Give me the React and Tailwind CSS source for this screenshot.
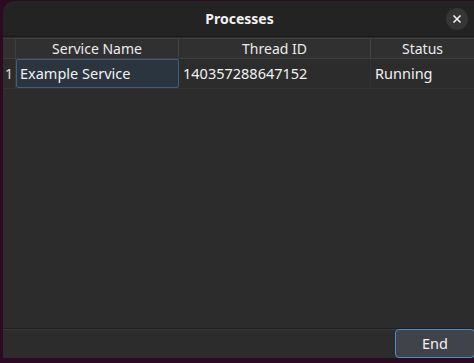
export default function App() {
  const font = { fontFamily: '"Noto Sans", "DejaVu Sans", sans-serif' };
  return (
    <div
      className="w-[474px] h-[363px] overflow-hidden bg-[#2b0a22] flex flex-col pl-[3px] pt-[1px]"
      style={font}>
      <div className="flex flex-col h-[357px] bg-[#2c2c2c] rounded-tl-[12px] overflow-hidden">
        {/* title bar */}
        <div className="h-[36px] shrink-0 bg-[#232323] flex items-center justify-center relative border-b border-[#1a1a1a]">
          <span className="text-[14px] font-bold text-[#f2f2f2] pl-[2px]">Processes</span>
          <div className="absolute right-[6px] top-[7px] w-[22px] h-[22px] rounded-full bg-[#353535] flex items-center justify-center">
            <svg width="10" height="10" viewBox="0 0 10 10">
              <path d="M1.5 1.5 L8.5 8.5 M8.5 1.5 L1.5 8.5" stroke="#f0f0f0" strokeWidth="1.6" />
            </svg>
          </div>
        </div>

        {/* table */}
        <div className="flex-1 flex flex-col pt-[1px] border-b border-[#1f1f1f]">
          <div className="flex h-[21px] bg-[#303030] border-t border-b border-[#3e3e3e] text-[14px] text-[#ececec] leading-none">
            <div className="w-[13px] border-r border-[#3e3e3e]" />
            <div className="w-[163px] border-r border-[#444] flex items-center justify-center">Service Name</div>
            <div className="w-[192px] border-r border-[#444] flex items-center justify-center">Thread ID</div>
            <div className="flex-1 flex items-center justify-center">Status</div>
          </div>
          <div className="flex h-[30px] border-b border-[#333] text-[14.5px] text-[#f2f2f2]">
            <div className="w-[13px] border-r border-[#3a3a3a] flex items-center justify-center text-[14px] text-[#e0e0e0]">1</div>
            <div className="w-[163px] bg-[#2a3540] border border-[#3f5e80] rounded-[2px] flex items-center pl-[3px]">
              Example Service
            </div>
            <div className="w-[192px] border-r border-[#333] flex items-center pl-[4px]">140357288647152</div>
            <div className="flex-1 flex items-center pl-[4px]">Running</div>
          </div>
        </div>

        {/* footer */}
        <div className="h-[29px] shrink-0 flex justify-end items-end border-t border-[#3a3a3a]">
          <button className="w-[80px] h-[29px] mr-[-1px] bg-[#40434a] border border-[#4a8cd0] rounded-[4px] text-[14.5px] text-[#f2f2f2]">
            End
          </button>
        </div>
      </div>
    </div>
  );
}
